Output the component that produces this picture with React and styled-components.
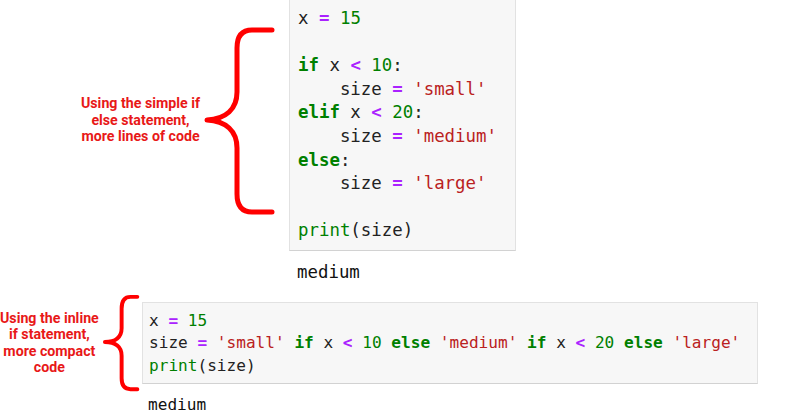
import styled, { createGlobalStyle } from "styled-components";

const Global = createGlobalStyle`
  html, body {
    margin: 0;
    padding: 0;
    background: #ffffff;
  }
  body {
    width: 800px;
    height: 420px;
    overflow: hidden;
  }
`;

const Page = styled.div`
  display: flex;
  flex-direction: column;
  width: 800px;
  height: 420px;
`;

const Row = styled.div`
  display: flex;
  align-items: flex-start;
  margin-top: ${(p) => p.$top}px;
`;

const Side = styled.div`
  width: ${(p) => p.$width}px;
  flex: none;
  display: flex;
  justify-content: flex-end;
  align-items: center;
  padding-top: ${(p) => p.$padTop}px;
  box-sizing: border-box;
`;

const Label = styled.div`
  font-family: Roboto, "Liberation Sans", sans-serif;
  font-weight: 700;
  font-size: 14.2px;
  line-height: 16.5px;
  color: #e81818;
  text-align: center;
  white-space: nowrap;
  margin-right: ${(p) => p.$gap}px;
`;

const Cell = styled.div`
  display: flex;
  flex-direction: column;
  margin-top: ${(p) => p.$top}px;
`;

const CodeBox = styled.div`
  width: ${(p) => p.$width}px;
  box-sizing: border-box;
  background: #f7f7f7;
  border: 1px solid #e2e2e2;
  border-bottom-color: #d2d2d2;
  border-top: ${(p) => (p.$open ? "none" : "1px solid #e2e2e2")};
  padding: ${(p) => p.$pad};
  font-family: "DejaVu Sans Mono", "Liberation Mono", monospace;
  font-size: ${(p) => p.$size}px;
  line-height: ${(p) => p.$lh}px;
  color: #222;
`;

const Line = styled.div`
  white-space: pre;
  min-height: ${(p) => p.$lh}px;
`;

const colors = {
  kw: "#008000",
  num: "#008000",
  str: "#ba2121",
  op: "#aa22ff",
  fn: "#008000",
};

const Tok = styled.span`
  color: ${(p) => colors[p.$kind]};
  font-weight: ${(p) => (p.$kind === "kw" || p.$kind === "op" ? 700 : 400)};
`;

const Output = styled.div`
  font-family: "DejaVu Sans Mono", "Liberation Mono", monospace;
  font-size: ${(p) => p.$size}px;
  line-height: ${(p) => p.$lh}px;
  color: #111;
  margin-top: ${(p) => p.$gap}px;
  padding-left: ${(p) => p.$indent}px;
`;

const TOKEN = /('[^']*')|\b(if|elif|else)\b|\b(print)\b|\b(\d+)\b|([=<])/g;

function highlight(text) {
  const out = [];
  let last = 0;
  let m;
  TOKEN.lastIndex = 0;
  while ((m = TOKEN.exec(text))) {
    if (m.index > last) out.push(text.slice(last, m.index));
    const kind = m[1] ? "str" : m[2] ? "kw" : m[3] ? "fn" : m[4] ? "num" : "op";
    out.push(
      <Tok key={m.index} $kind={kind}>
        {m[0]}
      </Tok>
    );
    last = m.index + m[0].length;
  }
  if (last < text.length) out.push(text.slice(last));
  return out;
}

function Code({ lines, lh, ...rest }) {
  return (
    <CodeBox $lh={lh} {...rest}>
      {lines.map((l, i) => (
        <Line key={i} $lh={lh}>
          {highlight(l)}
        </Line>
      ))}
    </CodeBox>
  );
}

function Brace({ width, height, d, stroke }) {
  return (
    <svg width={width} height={height} viewBox={`0 0 ${width} ${height}`}>
      <path
        d={d}
        fill="none"
        stroke="#ff0000"
        strokeWidth={stroke}
        strokeLinecap="round"
        strokeLinejoin="round"
      />
    </svg>
  );
}

const longCode = [
  "x = 15",
  "",
  "if x < 10:",
  "    size = 'small'",
  "elif x < 20:",
  "    size = 'medium'",
  "else:",
  "    size = 'large'",
  "",
  "print(size)",
];

const shortCode = [
  "x = 15",
  "size = 'small' if x < 10 else 'medium' if x < 20 else 'large'",
  "print(size)",
];

export default function App() {
  return (
    <Page>
      <Global />
      <Row $top={0}>
        <Side $width={289} $padTop={20}>
          <Label $gap={0}>
            Using the simple if
            <br />
            else statement,
            <br />
            more lines of code
          </Label>
          <Brace
            width={89}
            height={200}
            stroke={5}
            d="M72,10 L52,10 C42,10 37,16 37,28 L37,72 C37,89 26,99 7,100 C26,101 37,111 37,128 L37,174 C37,186 42,192 52,192 L72,192"
          />
        </Side>
        <Cell $top={0}>
          <Code lines={longCode} $width={227} $open $pad="7px 8px 7px" $size={17.4} lh={23.6} />
          <Output $size={17.4} $lh={23.6} $gap={10} $indent={8}>
            medium
          </Output>
        </Cell>
      </Row>
      <Row $top={6}>
        <Side $width={142} $padTop={0}>
          <Label $gap={2}>
            Using the inline
            <br />
            if statement,
            <br />
            more compact
            <br />
            code
          </Label>
          <Brace
            width={42}
            height={104}
            stroke={4}
            d="M37,5 L30,5 C24,5 21,9 21,17 L21,37 C21,46 15,51 4,51 C15,51 21,56 21,65 L21,88 C21,95 24,99 30,99 L37,99"
          />
        </Side>
        <Cell $top={11}>
          <Code lines={shortCode} $width={616} $pad="7px 6px 6px" $size={16.1} lh={22.5} />
          <Output $size={16.1} $lh={22.5} $gap={10} $indent={6}>
            medium
          </Output>
        </Cell>
      </Row>
    </Page>
  );
}
